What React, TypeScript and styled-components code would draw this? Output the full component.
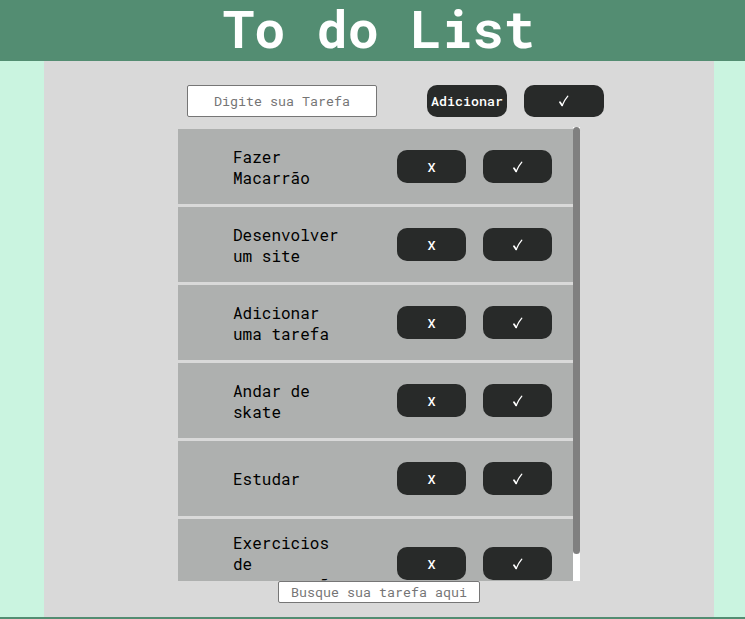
import { useLayoutEffect, useRef, useState } from 'react';
import styled, { createGlobalStyle } from 'styled-components';

const GlobalStyle = createGlobalStyle`
  * { box-sizing: border-box; }
  body {
    margin: 0;
    background: #caf4e0;
    font-family: "Roboto Mono", "DejaVu Sans Mono", monospace;
  }
`;

const Page = styled.div`
  display: flex;
  flex-direction: column;
  min-height: 100vh;
`;

const Header = styled.header`
  padding: 0 31px 5px 44px;
  background: #538d72;
`;

const Title = styled.h1`
  margin: 0;
  color: #fff;
  font-size: 52px;
  line-height: 56px;
  font-weight: 700;
  text-align: center;
`;

const Main = styled.main`
  display: flex;
  flex-direction: column;
  align-items: center;
  margin: 0 31px 0 44px;
  padding: 24px 0 14px;
  background: #d9d9d9;
`;

const AddForm = styled.form`
  display: flex;
  gap: 17px;
  margin-bottom: 10px;
  padding-left: 33px;
`;

const TextField = styled.input<{ $tall?: boolean }>`
  width: ${(p) => (p.$tall ? 190 : 202)}px;
  height: ${(p) => (p.$tall ? 32 : 22)}px;
  margin-right: ${(p) => (p.$tall ? 33 : 0)}px;
  padding: 1px 2px;
  border: 1px solid #767676;
  border-radius: 2px;
  background: #fff;
  font-family: inherit;
  text-align: center;
  &::placeholder { color: #757575; }
`;

const Button = styled.button<{ $wide?: boolean }>`
  display: flex;
  flex: none;
  align-items: center;
  justify-content: center;
  width: ${(p) => (p.$wide ? 80 : 69)}px;
  height: ${(p) => (p.$wide ? 32 : 33)}px;
  padding: 0;
  border: 0;
  border-radius: 10px;
  background: #282a29;
  color: #fff;
  font-family: inherit;
  font-weight: 500;
  cursor: pointer;
`;

const ListFrame = styled.div`
  display: flex;
  width: 60%;
  min-width: 402px;
  height: 454px;
`;

const TaskList = styled.ul`
  display: flex;
  flex: 1;
  flex-direction: column;
  gap: 3px;
  margin: 0;
  padding: 2px 0;
  list-style: none;
  overflow-y: auto;
  scrollbar-width: none;
`;

const Track = styled.div`
  width: 7px;
  background: #fff;
`;

const Thumb = styled.div`
  border-radius: 10px;
  background: #808080;
`;

const Task = styled.li`
  display: flex;
  flex: none;
  align-items: center;
  gap: 17px;
  min-height: 75px;
  padding: 13px 21px 13px 55px;
  background: #aeb0af;
`;

const TaskName = styled.span<{ $done: boolean }>`
  width: 120px;
  margin-right: auto;
  color: #000;
  font-size: 16px;
  line-height: 21px;
  text-decoration: ${(p) => (p.$done ? 'line-through' : 'none')};
`;

const Footer = styled.footer`
  flex: 1;
  min-height: 2px;
  background: #538d72;
`;

const CheckIcon = () => (
  <svg width="10" height="12" viewBox="0 0 10 12" fill="none" stroke="currentColor" aria-hidden="true">
    <path d="M1 7.2 L3.2 10.4" strokeWidth="1.8" strokeLinecap="round" />
    <path d="M3.2 10.4 C4.6 7.2 6.4 4 8.8 1.2" strokeWidth="1.3" strokeLinecap="round" />
  </svg>
);

type Item = { name: string; done: boolean };

const initial: Item[] = [
  'Fazer Macarrão',
  'Desenvolver um site',
  'Adicionar uma tarefa',
  'Andar de skate',
  'Estudar',
  'Exercicios de programação',
].map((name) => ({ name, done: false }));

export default function App() {
  const [items, setItems] = useState(initial);
  const [draft, setDraft] = useState('');
  const [query, setQuery] = useState('');
  const [bar, setBar] = useState({ size: 0, offset: 0 });
  const listRef = useRef<HTMLUListElement>(null);

  const measure = () => {
    const el = listRef.current;
    if (!el) return;
    const ratio = el.clientHeight / el.scrollHeight;
    setBar({ size: ratio < 1 ? el.clientHeight * ratio : 0, offset: el.scrollTop * ratio });
  };
  useLayoutEffect(measure, [items, query]);

  const add = () => {
    if (!draft.trim()) return;
    setItems([...items, { name: draft.trim(), done: false }]);
    setDraft('');
  };
  const toggle = (item: Item) =>
    setItems(items.map((i) => (i === item ? { ...i, done: !i.done } : i)));

  return (
    <Page>
      <GlobalStyle />
      <Header>
        <Title>To do List</Title>
      </Header>
      <Main>
        <AddForm onSubmit={(e) => { e.preventDefault(); add(); }}>
          <TextField
            $tall
            aria-label="Digite sua Tarefa"
            placeholder="Digite sua Tarefa"
            value={draft}
            onChange={(e) => setDraft(e.target.value)}
          />
          <Button $wide type="submit">Adicionar</Button>
          <Button
            $wide
            type="button"
            aria-label="Concluir todas"
            onClick={() => setItems(items.map((i) => ({ ...i, done: true })))}
          >
            <CheckIcon />
          </Button>
        </AddForm>
        <ListFrame>
          <TaskList ref={listRef} onScroll={measure}>
            {items
              .filter((i) => i.name.toLowerCase().includes(query.toLowerCase()))
              .map((item) => (
                <Task key={item.name}>
                  <TaskName $done={item.done}>{item.name}</TaskName>
                  <Button
                    aria-label={`Remover ${item.name}`}
                    onClick={() => setItems(items.filter((i) => i !== item))}
                  >
                    X
                  </Button>
                  <Button aria-label={`Concluir ${item.name}`} onClick={() => toggle(item)}>
                    <CheckIcon />
                  </Button>
                </Task>
              ))}
          </TaskList>
          <Track>
            <Thumb style={{ height: bar.size, transform: `translateY(${bar.offset}px)` }} />
          </Track>
        </ListFrame>
        <TextField
          aria-label="Busque sua tarefa aqui"
          placeholder="Busque sua tarefa aqui"
          value={query}
          onChange={(e) => setQuery(e.target.value)}
        />
      </Main>
      <Footer />
    </Page>
  );
}
